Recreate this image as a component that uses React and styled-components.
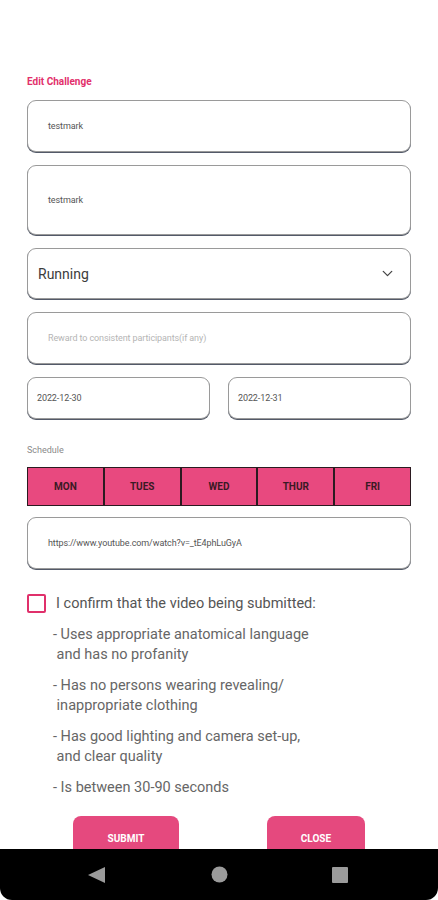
import React from "react";
import styled, { createGlobalStyle } from "styled-components";
import { ChevronDown } from "lucide-react";

const GlobalStyle = createGlobalStyle`
  html, body {
    margin: 0;
    padding: 0;
    background: #fff;
    font-family: Roboto, "Liberation Sans", sans-serif;
    overflow: hidden;
  }
`;

const Page = styled.div`
  width: 438px;
  height: 900px;
  background: #fff;
  position: relative;
  overflow: hidden;
`;

const Form = styled.div`
  padding: 76px 27px 0 27px;
  display: flex;
  flex-direction: column;
`;

const Heading = styled.div`
  font-size: 10px;
  font-weight: 700;
  color: #e2306b;
  line-height: 12px;
  margin-bottom: 12px;
`;

const Field = styled.div`
  height: ${(p) => p.h || 52}px;
  box-sizing: border-box;
  border: 1px solid #9a9a9a;
  border-radius: 9px;
  box-shadow: 0 1px 0.5px rgba(25, 35, 55, 0.75);
  display: flex;
  align-items: center;
  justify-content: space-between;
  padding: 0 ${(p) => p.pr || 20}px 0 ${(p) => p.pl || 20}px;
  margin-bottom: ${(p) => (p.mb !== undefined ? p.mb : 13)}px;
  flex: ${(p) => (p.grow ? 1 : "none")};
  background: #fff;
`;

const SmallText = styled.span`
  font-size: 9px;
  color: ${(p) => (p.muted ? "#b5b5b5" : "#555")};
  letter-spacing: -0.1px;
`;

const SelectText = styled.span`
  font-size: 14px;
  color: #3c3c3c;
`;

const Row = styled.div`
  display: flex;
  gap: 18px;
`;

const Label = styled.div`
  font-size: 9px;
  color: #8a8a8a;
  margin-top: 25px;
  line-height: 12px;
`;

const Days = styled.div`
  display: flex;
  margin-top: 11px;
  height: 39px;
  border: 1px solid #2b1a20;
  box-sizing: border-box;
  margin-bottom: 11px;
`;

const Day = styled.div`
  flex: 1;
  background: #e8497f;
  display: flex;
  align-items: center;
  justify-content: center;
  font-size: 10px;
  font-weight: 700;
  color: #3a1a24;
  border-left: ${(p) => (p.first ? "none" : "2px solid #2b1a20")};
`;

const Confirm = styled.div`
  display: flex;
  align-items: center;
  gap: 10px;
  margin-top: 25px;
`;

const Box = styled.div`
  width: 19px;
  height: 19px;
  box-sizing: border-box;
  border: 2px solid #e0306b;
  border-radius: 2px;
`;

const ConfirmText = styled.span`
  font-size: 14.5px;
  color: #555;
`;

const Rules = styled.div`
  padding-left: 26px;
  margin-top: 12px;
  display: flex;
  flex-direction: column;
  gap: 11px;
`;

const Rule = styled.div`
  font-size: 14.5px;
  line-height: 20px;
  color: #666;
`;

const Buttons = styled.div`
  display: flex;
  margin-top: 18px;
  padding-left: 46px;
  gap: 88px;
`;

const Button = styled.button`
  width: ${(p) => p.w}px;
  height: 44px;
  border: none;
  border-radius: 8px;
  background: #e5497e;
  color: #fff;
  font-family: Roboto, "Liberation Sans", sans-serif;
  font-size: 10px;
  font-weight: 700;
  padding: 0;
`;

const NavBar = styled.div`
  position: absolute;
  left: 0;
  right: 0;
  bottom: 0;
  height: 51px;
  background: #000;
  border-radius: 0 0 12px 12px;
  display: flex;
  align-items: center;
  justify-content: space-between;
  padding: 0 90px 0 88px;
`;

const Nav = () => (
  <NavBar>
    <svg width="18" height="16" viewBox="0 0 18 16">
      <polygon points="17,0 17,16 0,8" fill="#9b9b9b" />
    </svg>
    <svg width="17" height="17" viewBox="0 0 17 17">
      <circle cx="8.5" cy="8.5" r="8" fill="#9b9b9b" />
    </svg>
    <svg width="16" height="16" viewBox="0 0 16 16">
      <rect x="0" y="0" width="16" height="16" rx="1" fill="#9b9b9b" />
    </svg>
  </NavBar>
);

const days = ["MON", "TUES", "WED", "THUR", "FRI"];

const rules = [
  ["- Uses appropriate anatomical language", "\u00a0and has no profanity"],
  ["- Has no persons wearing revealing/", "\u00a0inappropriate clothing"],
  ["- Has good lighting and camera set-up,", "\u00a0and clear quality"],
  ["- Is between 30-90 seconds"],
];

export default function App() {
  return (
    <Page>
      <GlobalStyle />
      <Form>
        <Heading>Edit Challenge</Heading>
        <Field>
          <SmallText>testmark</SmallText>
        </Field>
        <Field h={70}>
          <SmallText>testmark</SmallText>
        </Field>
        <Field h={51} pl={10} pr={14}>
          <SelectText>Running</SelectText>
          <ChevronDown size={17} color="#444" strokeWidth={1.8} />
        </Field>
        <Field>
          <SmallText muted>Reward to consistent participants(if any)</SmallText>
        </Field>
        <Row>
          <Field h={42} pl={9} grow mb={0}>
            <SmallText>2022-12-30</SmallText>
          </Field>
          <Field h={42} pl={9} grow mb={0}>
            <SmallText>2022-12-31</SmallText>
          </Field>
        </Row>
        <Label>Schedule</Label>
        <Days>
          {days.map((d, i) => (
            <Day key={d} first={i === 0}>
              {d}
            </Day>
          ))}
        </Days>
        <Field mb={0}>
          <SmallText>https://www.youtube.com/watch?v=_tE4phLuGyA</SmallText>
        </Field>
        <Confirm>
          <Box />
          <ConfirmText>I confirm that the video being submitted:</ConfirmText>
        </Confirm>
        <Rules>
          {rules.map((r, i) => (
            <Rule key={i}>
              {r.map((line, j) => (
                <div key={j}>{line}</div>
              ))}
            </Rule>
          ))}
        </Rules>
        <Buttons>
          <Button w={106}>SUBMIT</Button>
          <Button w={98}>CLOSE</Button>
        </Buttons>
      </Form>
      <Nav />
    </Page>
  );
}
